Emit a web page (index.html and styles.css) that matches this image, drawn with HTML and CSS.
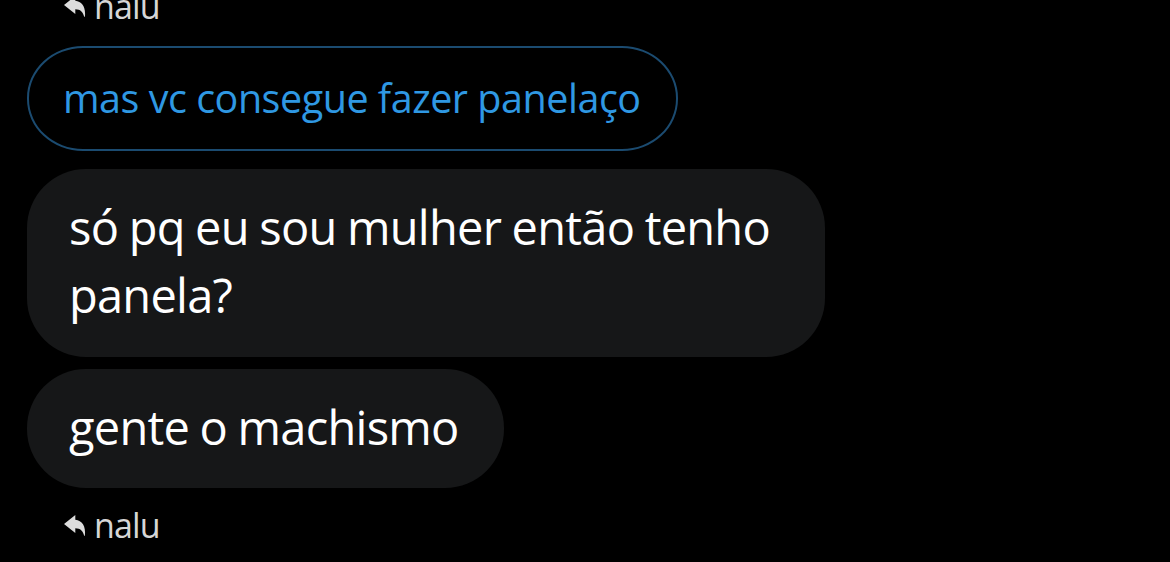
FILE: index.html
```html
<!DOCTYPE html>
<html lang="pt">
<head>
<meta charset="utf-8">
<title>Chat</title>
<link rel="stylesheet" href="styles.css">
</head>
<body>
<main class="chat">
  <div class="reply reply-top">
    <svg class="reply-icon" viewBox="0 0 22 22"><path d="M0 9 11.3 0V4.8C18 5.4 22 11 20.9 20.8H20.2C18.8 15.5 16.5 13.4 11.3 13.2V18Z"/></svg>
    <span class="name">nalu</span>
  </div>
  <div class="quote">mas vc consegue fazer panelaço</div>
  <div class="bubble bubble-long">só pq eu sou mulher então tenho<br>panela?</div>
  <div class="bubble bubble-short">gente o machismo</div>
  <div class="reply reply-bottom">
    <svg class="reply-icon" viewBox="0 0 22 22"><path d="M0 9 11.3 0V4.8C18 5.4 22 11 20.9 20.8H20.2C18.8 15.5 16.5 13.4 11.3 13.2V18Z"/></svg>
    <span class="name">nalu</span>
  </div>
</main>
</body>
</html>
```
FILE: styles.css
```css
* { box-sizing: border-box; }
body { margin: 0; background: #000; font-family: "Open Sans", "Noto Sans", sans-serif; }
.chat { display: flex; flex-direction: column; align-items: flex-start; height: 562px; padding-left: 27px; overflow: hidden; }
.reply { display: flex; align-items: center; gap: 8px; height: 40px; padding-left: 37px; color: #d6d6d6; font-size: 34px; letter-spacing: -0.9px; line-height: 40px; flex: none; }
.reply-icon { width: 22px; height: 22px; fill: #dcdcdc; }
.name { padding-bottom: 2px; }
.reply-top { margin-top: -13px; }
.quote { flex: none; width: 651px; height: 105px; margin-top: 19px; padding-left: 34px; border: 2px solid #1b4b70; border-radius: 56px / 52px; color: #2f98e3; font-size: 39.5px; letter-spacing: -0.48px; line-height: 100px; white-space: nowrap; }
.bubble { flex: none; padding: 24px 0 0 42px; border-radius: 59px; background: #161718; color: #fff; font-size: 47px; letter-spacing: -0.75px; word-spacing: -1px; line-height: 68px; white-space: nowrap; }
.bubble-long { width: 798px; height: 188px; margin-top: 18px; }
.bubble-short { width: 477px; height: 119px; margin-top: 12px; }
.reply-bottom { margin-top: 18px; }
```
